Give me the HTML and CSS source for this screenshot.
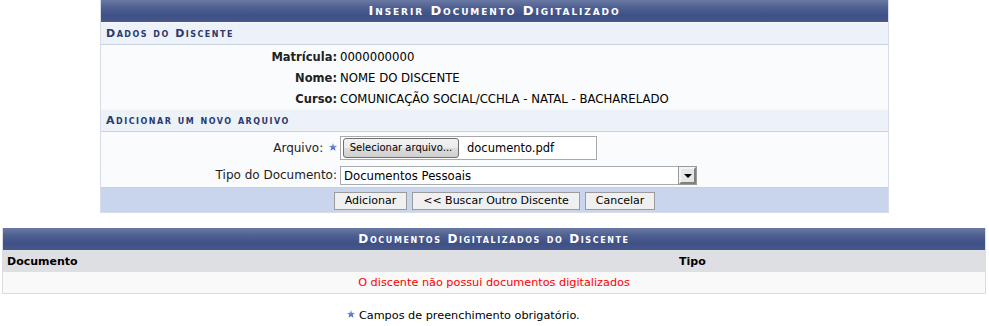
FILE: index.html
```html
<!DOCTYPE html>
<html lang="pt-BR">
<head>
<meta charset="utf-8">
<title>Inserir Documento Digitalizado</title>
<link rel="stylesheet" href="styles.css">
</head>
<body>
<section class="form-box">
  <h2 class="title title-main">Inserir Documento Digitalizado</h2>
  <h3 class="subtitle">Dados do Discente</h3>
  <div class="rows info">
    <div class="row"><span class="label strong">Matrícula:</span><span class="value">0000000000</span></div>
    <div class="row"><span class="label strong">Nome:</span><span class="value">NOME DO DISCENTE</span></div>
    <div class="row"><span class="label strong">Curso:</span><span class="value">COMUNICAÇÃO SOCIAL/CCHLA - NATAL - BACHARELADO</span></div>
  </div>
  <h3 class="subtitle">Adicionar um novo arquivo</h3>
  <div class="rows fields">
    <div class="row row-file">
      <span class="label">Arquivo: <svg class="star" viewBox="0 0 10 10" width="8" height="8"><defs><linearGradient id="sg" x1="0" y1="0" x2="0" y2="1"><stop offset="0" stop-color="#9fb6e6"/><stop offset="1" stop-color="#2f58b0"/></linearGradient></defs><polygon points="5,0 6.3,3.4 10,3.6 7.1,5.9 8.1,9.6 5,7.5 1.9,9.6 2.9,5.9 0,3.6 3.7,3.4" fill="url(#sg)"/></svg></span>
      <span class="value"><span class="file-input"><span class="file-btn">Selecionar arquivo...</span><span class="file-name">documento.pdf</span></span></span>
    </div>
    <div class="row row-select">
      <span class="label">Tipo do Documento:</span>
      <span class="value"><span class="select"><span class="select-text">Documentos Pessoais</span><span class="select-arrow"><svg viewBox="0 0 8 4" width="8" height="4"><polygon points="0,0 8,0 4,4" fill="#000"/></svg></span></span></span>
    </div>
  </div>
  <div class="actions">
    <button class="btn" type="button">Adicionar</button>
    <button class="btn" type="button">&lt;&lt; Buscar Outro Discente</button>
    <button class="btn" type="button">Cancelar</button>
  </div>
</section>

<section class="list-box">
  <h2 class="title title-list">Documentos Digitalizados do Discente</h2>
  <div class="list-head">
    <span class="col-doc">Documento</span>
    <span class="col-tipo">Tipo</span>
  </div>
  <div class="list-empty">O discente não possui documentos digitalizados</div>
</section>

<p class="note"><svg class="star" viewBox="0 0 10 10" width="8" height="8"><defs><linearGradient id="sg2" x1="0" y1="0" x2="0" y2="1"><stop offset="0" stop-color="#9fb6e6"/><stop offset="1" stop-color="#2f58b0"/></linearGradient></defs><polygon points="5,0 6.3,3.4 10,3.6 7.1,5.9 8.1,9.6 5,7.5 1.9,9.6 2.9,5.9 0,3.6 3.7,3.4" fill="url(#sg2)"/></svg> Campos de preenchimento obrigatório.</p>
</body>
</html>
```

FILE: styles.css
```css
* { box-sizing: border-box; }
html, body {
  margin: 0;
  padding: 0;
  background: #fff;
  font-family: "DejaVu Sans", Verdana, sans-serif;
  font-size: 11px;
  color: #000;
}
.form-box {
  width: 789px;
  margin: 0 auto;
  border-left: 1px solid #d6dde8;
  border-right: 1px solid #d6dde8;
}
.title {
  margin: 0;
  height: 22px;
  line-height: 22px;
  text-align: center;
  color: #fff;
  font-weight: bold;
  font-variant: small-caps;
  background: linear-gradient(#6a79a3 0%, #4e5f91 35%, #3f5086 70%, #46578b 100%);
}
.title-main { font-size: 13px; letter-spacing: 1.9px; }
.title-list { font-size: 12px; letter-spacing: 1.6px; }
.subtitle {
  margin: 0;
  height: 23px;
  line-height: 22px;
  padding-left: 5px;
  font-size: 11px;
  font-weight: bold;
  font-variant: small-caps;
  letter-spacing: 1.5px;
  color: #283a6e;
  background: #edf1f8;
  border-top: 1px solid #f6f8fc;
  border-bottom: 1px solid #c8d3e2;
}
.rows {
  background: #f9fbfd;
  display: flex;
  flex-direction: column;
}
.info { padding: 1px 0 0; }
.row {
  display: grid;
  grid-template-columns: 236px 1fr;
  column-gap: 3px;
  align-items: center;
}
.info .row { height: 21px; }
.label { text-align: right; color: #222; font-size: 12px; }
.label.strong { font-weight: bold; font-size: 11.5px; }
.value { color: #000; font-size: 11.7px; }
.star { vertical-align: 1px; margin-left: 2px; }
.row-file { height: 31px; }
.row-select { height: 24px; align-items: start; padding-top: 3px; }
.row-select .label { padding-top: 2px; }
.file-input {
  display: inline-flex;
  align-items: center;
  width: 257px;
  height: 24px;
  border: 1px solid #a9a9a9;
  background: #fff;
  padding: 0 2px;
  vertical-align: middle;
}
.file-btn {
  display: inline-block;
  width: 116px;
  height: 20px;
  line-height: 18px;
  text-align: center;
  border: 1px solid #707070;
  border-radius: 3px;
  background: linear-gradient(#f2f2f2 0%, #ebebeb 50%, #dddddd 51%, #cfcfcf 100%);
  font-size: 10px;
  color: #000;
}
.file-name { margin-left: 8px; font-size: 11.5px; }
.select {
  display: inline-flex;
  align-items: center;
  justify-content: space-between;
  width: 357px;
  height: 19px;
  border: 1px solid #a5acb2;
  background: #fff;
  padding-left: 3px;
}
.select-text { font-size: 11.7px; }
.select-arrow {
  display: inline-flex;
  align-items: center;
  justify-content: center;
  width: 17px;
  height: 17px;
  background: #e6e6e6;
  border: 2px solid;
  border-color: #f4f4f4 #808080 #808080 #f4f4f4;
  outline: 1px solid #9a9a9a;
}
.actions {
  display: flex;
  justify-content: center;
  align-items: center;
  gap: 5px;
  height: 26px;
  background: #c8d5ec;
  border-top: 1px solid #c4cfe6;
  border-bottom: 1px solid #d6dde8;
  padding-top: 1px;
}
.btn {
  height: 18px;
  padding: 0 10px;
  font-family: "DejaVu Sans", Verdana, sans-serif;
  font-size: 11px;
  color: #000;
  background: #f0f0f0;
  border: 1px solid #9c9c9c;
  border-radius: 0;
  margin: 0;
}
.list-box {
  margin: 15px 3px 0 2px;
  border: 1px solid #dcdcdc;
  border-top: 0;
}
.list-head {
  display: grid;
  grid-template-columns: 676px 1fr;
  height: 22px;
  align-items: center;
  background: #dedfe3;
  font-weight: bold;
  font-size: 11px;
}
.col-doc { padding-left: 4px; }
.list-empty {
  height: 21px;
  line-height: 21px;
  text-align: center;
  color: #ff0000;
  background: #f9f9f9;
  font-size: 11.25px;
}
.note {
  margin: 15px 0 0;
  text-align: center;
  font-size: 11.25px;
  color: #000;
  padding-right: 64px;
}
```
